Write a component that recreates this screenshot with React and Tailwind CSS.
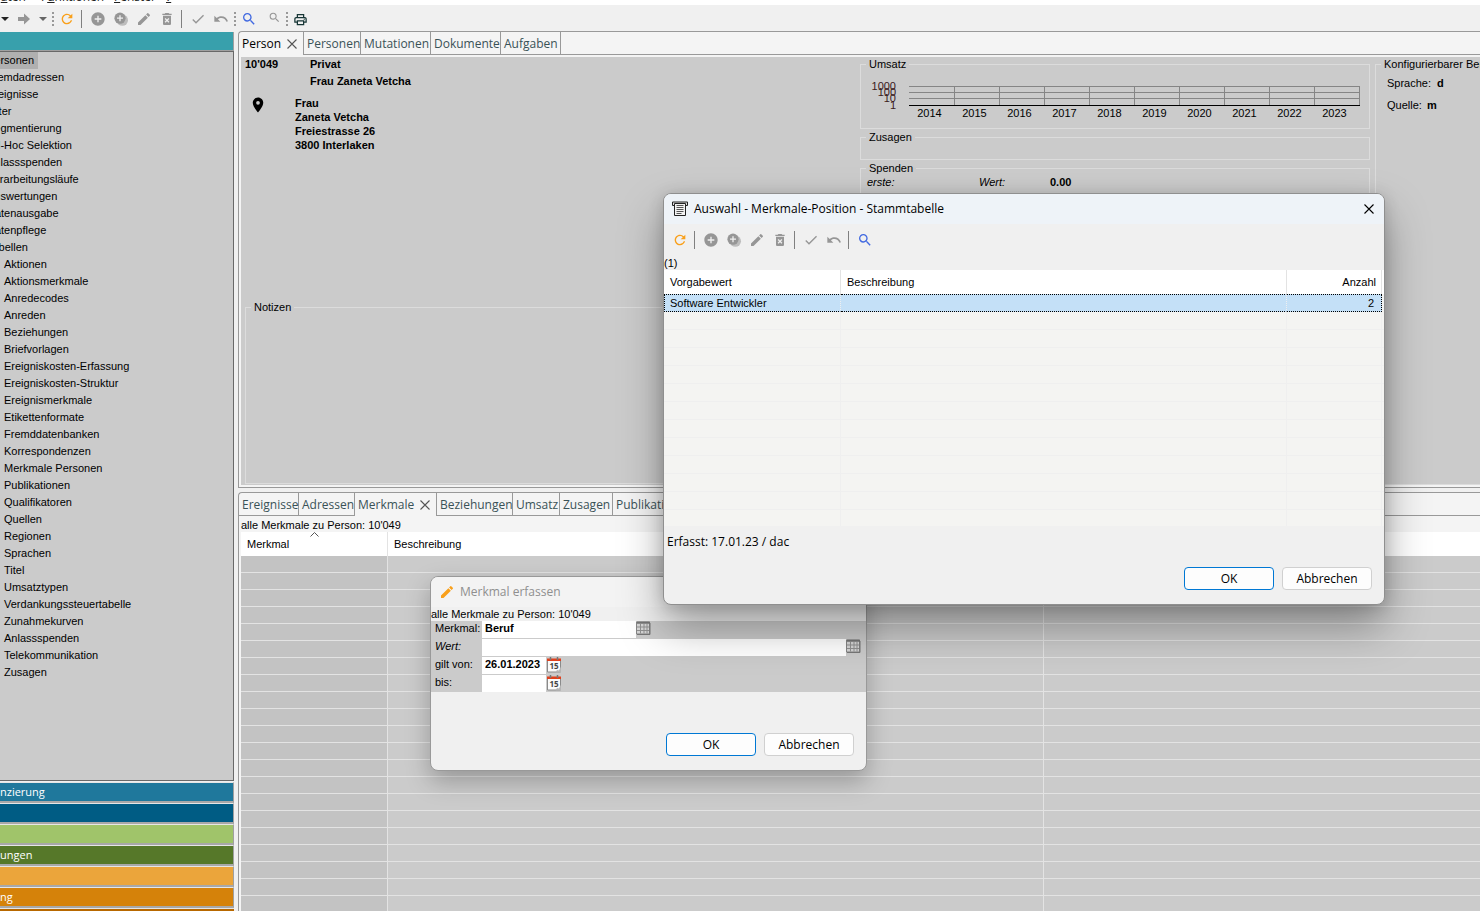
import React from "react";
import {
  MdRefresh,
  MdAddCircle,
  MdEdit,
  MdDeleteForever,
  MdCheck,
  MdUndo,
  MdSearch,
  MdOutlinePrint,
  MdPlace,
} from "react-icons/md";

const UI = "font-['Open_Sans','Noto_Sans',sans-serif]";

const topNav = [
  "Personen",
  "Fremdadressen",
  "Ereignisse",
  "Filter",
  "Segmentierung",
  "Ad-Hoc Selektion",
  "Anlassspenden",
  "Verarbeitungsläufe",
  "Auswertungen",
  "Datenausgabe",
  "Datenpflege",
  "Tabellen",
];

const subNav = [
  "Aktionen",
  "Aktionsmerkmale",
  "Anredecodes",
  "Anreden",
  "Beziehungen",
  "Briefvorlagen",
  "Ereigniskosten-Erfassung",
  "Ereigniskosten-Struktur",
  "Ereignismerkmale",
  "Etikettenformate",
  "Fremddatenbanken",
  "Korrespondenzen",
  "Merkmale Personen",
  "Publikationen",
  "Qualifikatoren",
  "Quellen",
  "Regionen",
  "Sprachen",
  "Titel",
  "Umsatztypen",
  "Verdankungssteuertabelle",
  "Zunahmekurven",
  "Anlassspenden",
  "Telekommunikation",
  "Zusagen",
];

const sections = [
  { text: "nzierung", color: "bg-[#1f789c]" },
  { text: "", color: "bg-[#005c84]" },
  { text: "", color: "bg-[#a0c46a]" },
  { text: "ungen", color: "bg-[#567829]" },
  { text: "", color: "bg-[#eba53b]" },
  { text: "ng", color: "bg-[#d5820a]" },
];

const years = [2014, 2015, 2016, 2017, 2018, 2019, 2020, 2021, 2022, 2023];

function CopyAddIcon() {
  return (
    <svg width="16" height="16" viewBox="0 0 16 16">
      <circle cx="9.4" cy="9.2" r="5.6" fill="#bdbdbd" />
      <circle cx="7" cy="7.2" r="5.6" fill="#969696" />
      <path d="M7 4.2v6M4 7.2h6" stroke="#f0f0f0" strokeWidth="1.3" />
    </svg>
  );
}

function ArrowIcon() {
  return (
    <svg width="16" height="16" viewBox="0 0 16 16">
      <path d="M2 6h6V2.6L14 8l-6 5.4V10H2z" fill="#969696" />
    </svg>
  );
}

function CloseIcon({ size = 10, color = "#555" }) {
  return (
    <svg width={size} height={size} viewBox="0 0 10 10" className="shrink-0">
      <path d="M.5.5l9 9M9.5.5l-9 9" stroke={color} strokeWidth="1.1" fill="none" />
    </svg>
  );
}

function ListWindowIcon() {
  return (
    <svg width="16" height="16" viewBox="0 0 16 16">
      <path d="M.5 1h15v3.5h-2v-1h-11v1h-2z" fill="#ddd" stroke="#222" />
      <path d="M2.5 2.5h11v12h-11z" fill="#f2f2f2" stroke="#222" />
      <path d="M4.500 4.500h7M4.500 6.500h7M4.500 8.500h7M4.500 10.500h7M4.500 12.500h5" stroke="#555" />
    </svg>
  );
}

function GridIcon() {
  return (
    <svg width="15" height="14" viewBox="0 0 15 14">
      <path d="M.5 1h13v12H.5z" fill="#d6d6d6" stroke="#858585" />
      <path d="M1 1.8h13" stroke="#757575" strokeWidth="2" />
      <path d="M1 6h12M1 9.500h12M4.500 3v9.500M8 3v9.500M11 3v9.500" stroke="#909090" />
      <path d="M14 2v11.500H1" fill="none" stroke="#777" />
    </svg>
  );
}

function CalendarIcon() {
  return (
    <svg width="15" height="16" viewBox="0 0 15 16">
      <path d="M.5 3h13v12H.5z" fill="#fbfbfb" stroke="#8a8a8a" />
      <path d="M0 1.500h14v2.500H0z" fill="#e0401c" />
      <path d="M3.500 0v3M10.500 0v3" stroke="#777" strokeWidth="1.500" />
      <path d="M14 9.500v6H8.500l1.500-2.500 2 .5z" fill="#b5b5b5" />
      <text x="7" y="12" textAnchor="middle" fontSize="8" fontWeight="700" fill="#444" className="font-['Open_Sans',sans-serif]">
        15
      </text>
    </svg>
  );
}

function Tool({ label, children, className = "w-[23px]" }) {
  return (
    <button type="button" aria-label={label} className={`flex h-6 shrink-0 items-center justify-center text-[#969696] ${className}`}>
      {children}
    </button>
  );
}

function Caret({ label, color }) {
  return (
    <Tool label={label} className="w-[10px]">
      <svg width="8" height="4" viewBox="0 0 8 4">
        <path d="M0 0h8L4 4z" fill={color} />
      </svg>
    </Tool>
  );
}

function Rule() {
  return (
    <div className="w-2 shrink-0 pl-[3px]">
      <div className="h-[18px] w-px bg-[#808080]" />
    </div>
  );
}

function Dots() {
  return (
    <div className="flex w-[5px] shrink-0 justify-center">
      <div className="h-[14px] border-l-2 border-dotted border-[#999]" />
    </div>
  );
}

function EditTools() {
  return (
    <>
      <Tool label="Aktualisieren">
        <MdRefresh size={16} className="text-[#f9a01b]" />
      </Tool>
      <Rule />
      <Tool label="Neu">
        <MdAddCircle size={16} />
      </Tool>
      <Tool label="Kopieren">
        <CopyAddIcon />
      </Tool>
      <Tool label="Bearbeiten">
        <MdEdit size={16} />
      </Tool>
      <Tool label="Löschen">
        <MdDeleteForever size={16} />
      </Tool>
      <Rule />
      <Tool label="Speichern">
        <MdCheck size={16} />
      </Tool>
      <Tool label="Rückgängig">
        <MdUndo size={16} />
      </Tool>
    </>
  );
}

function Tab({ label, width, active, dark, closable }) {
  return (
    <button
      type="button"
      role="tab"
      aria-selected={!!active}
      className={`flex h-[23px] shrink-0 items-center gap-[6px] border-r border-[#999] pl-[3px] text-[12px] whitespace-nowrap ${UI} ${width} ${
        active ? "" : "border-b pt-px"
      } ${dark ? "text-black" : "text-[#3a5257]"}`}
    >
      {label}
      {closable && <CloseIcon />}
    </button>
  );
}

function Group({ title, className = "", children }) {
  return (
    <fieldset className={`min-w-0 border border-[#dcdcdc] px-[5px] ${className}`}>
      <legend className="px-[3px] leading-[13px] whitespace-nowrap">{title}</legend>
      {children}
    </fieldset>
  );
}

function RevenueChart() {
  return (
    <svg width="498" height="52" viewBox="0 0 498 52" className="text-[11px]" shapeRendering="crispEdges">
      <path d="M43 15.500h451M43 21.500h451M43 27.500h451" stroke="#858585" />
      {years.map((y, i) => (
        <path key={y} d={`M${88.5 + i * 45} 15v19`} stroke="#858585" />
      ))}
      <path d="M43 34.500h451" stroke="#000" />
      {[
        ["1000", 19],
        ["100", 25],
        ["10", 31],
        ["1", 38],
      ].map(([t, y]) => (
        <text key={t} x="30" y={y} textAnchor="end" fill="#3a1a20">
          {t}
        </text>
      ))}
      {years.map((y, i) => (
        <text key={y} x={63.5 + i * 45} y="46" textAnchor="middle">
          {y}
        </text>
      ))}
    </svg>
  );
}

function DialogButtons() {
  return (
    <div className={`flex justify-end gap-2 pr-3 pb-[14px] text-[12px] ${UI}`}>
      <button type="button" className="h-[23px] w-[90px] rounded border border-[#0078d4] bg-[#fdfdfd]">
        OK
      </button>
      <button type="button" className="h-[23px] w-[90px] rounded border border-[#d0d0d0] bg-[#fdfdfd]">
        Abbrechen
      </button>
    </div>
  );
}

function FormRow({ id, label, italic, value, width, children }) {
  return (
    <div className="flex h-[18px] items-start">
      <label htmlFor={id} className={`w-[51px] shrink-0 pl-1 leading-[15px] ${italic ? "italic" : ""}`}>
        {label}
      </label>
      <input id={id} defaultValue={value} className={`h-[17px] bg-white px-[3px] pb-[3px] font-bold outline-none ${width}`} />
      {children}
    </div>
  );
}

function EditDialog() {
  return (
    <section
      role="dialog"
      aria-label="Merkmal erfassen"
      className="absolute top-[576px] left-[430px] flex h-[195px] w-[437px] flex-col overflow-hidden rounded-lg border border-[#999] bg-[#f0f0f0] shadow-[0_10px_24px_rgba(0,0,0,0.26)]"
    >
      <header className={`flex h-[30px] shrink-0 items-center gap-[5px] bg-[#f3f3f3] pl-2 text-[12px] text-[#8f8f8f] ${UI}`}>
        <MdEdit size={16} className="text-[#f9a01b]" />
        Merkmal erfassen
      </header>
      <p className="h-[14px] shrink-0 leading-[14px]">alle Merkmale zu Person: 10'049</p>
      <form className="h-[71px] shrink-0 bg-[#cbcbcb]">
        <FormRow id="merkmal" label="Merkmal:" value="Beruf" width="w-[154px]">
          <button type="button" aria-label="Merkmal wählen">
            <GridIcon />
          </button>
        </FormRow>
        <FormRow id="wert" label="Wert:" italic width="flex-1">
          <button type="button" aria-label="Wert wählen" className="w-5">
            <GridIcon />
          </button>
        </FormRow>
        <FormRow id="von" label="gilt von:" value="26.01.2023" width="w-[64px]">
          <button type="button" aria-label="Datum von wählen" className="pl-px">
            <CalendarIcon />
          </button>
        </FormRow>
        <FormRow id="bis" label="bis:" width="w-[64px]">
          <button type="button" aria-label="Datum bis wählen" className="pl-px">
            <CalendarIcon />
          </button>
        </FormRow>
      </form>
      <div className="mt-auto">
        <DialogButtons />
      </div>
    </section>
  );
}

function SelectDialog() {
  return (
    <section
      role="dialog"
      aria-label="Auswahl"
      className="absolute top-[193px] left-[663px] flex h-[412px] w-[722px] flex-col overflow-hidden rounded-lg border border-[#8f8f8f] bg-[#f0f0f0] shadow-[0_22px_44px_rgba(0,0,0,0.34),0_2px_16px_rgba(0,0,0,0.16)]"
    >
      <header className={`flex h-[30px] shrink-0 items-center gap-[6px] bg-[#eef3f8] pr-[10px] pl-2 text-[12px] ${UI}`}>
        <ListWindowIcon />
        <span className="flex-1">Auswahl - Merkmale-Position - Stammtabelle</span>
        <button type="button" aria-label="Schliessen">
          <CloseIcon color="#000" />
        </button>
      </header>
      <div className="flex h-8 shrink-0 items-center pl-1">
        <EditTools />
        <Rule />
        <Tool label="Suchen">
          <MdSearch size={16} className="text-[#4169e1]" />
        </Tool>
      </div>
      <p className="h-[14px] shrink-0 leading-[14px]">(1)</p>
      <div className="h-[256px] shrink-0 overflow-hidden bg-[#f4f4f2]">
        <table className="w-full table-fixed border-separate border-spacing-0 text-left">
          <colgroup>
            <col className="w-[177px]" />
            <col />
            <col className="w-[95px]" />
            <col className="w-[2px]" />
          </colgroup>
          <thead>
            <tr className="h-6 bg-white">
              <th className="border-r border-[#e3e3e3] pl-[6px] font-normal">Vorgabewert</th>
              <th className="border-r border-[#e3e3e3] pl-[6px] font-normal">Beschreibung</th>
              <th className="border-r border-[#e3e3e3] pr-[5px] text-right font-normal">Anzahl</th>
              <td />
            </tr>
          </thead>
          <tbody>
            <tr className="h-[18px] bg-[#c4e0f7]">
              <td className="border-y border-r border-l border-dotted border-black border-r-[#efefef] pl-[5px] leading-4">Software Entwickler</td>
              <td className="border-y border-r border-dotted border-black border-r-[#efefef]" />
              <td className="border-y border-r border-dotted border-black pr-[7px] text-right leading-4">2</td>
              <td className="bg-[#f4f4f2]" />
            </tr>
            {Array.from({ length: 12 }, (_, i) => (
              <tr key={i} className="h-[18px]">
                <td className="border-r border-b border-[#efefef]" />
                <td className="border-r border-b border-[#efefef]" />
                <td className="border-r border-b border-[#efefef]" />
                <td className="border-b border-[#efefef]" />
              </tr>
            ))}
          </tbody>
        </table>
      </div>
      <p className={`pt-[7px] pl-[3px] text-[12px] leading-[18px] ${UI}`}>Erfasst: 17.01.23 / dac</p>
      <div className="mt-auto">
        <DialogButtons />
      </div>
    </section>
  );
}

export default function App() {
  return (
    <div className="relative flex h-screen flex-col overflow-hidden bg-[#f0f0f0] font-['Liberation_Sans',Arial,sans-serif] text-[11px] text-black">
      <nav className={`flex h-[5px] shrink-0 items-end overflow-hidden bg-white pb-px text-[12px] leading-[14px] text-[#222] ${UI}`}>
        <a href="#daten" className="-ml-2 w-[49px]">D<u>a</u>ten</a>
        <a href="#funktionen" className="w-[73px]">F<u>u</u>nktionen</a>
        <a href="#fenster" className="w-[52px]"><u>F</u>enster</a>
        <a href="#hilfe"><u>?</u></a>
      </nav>

      <div className="flex h-[26px] shrink-0 items-center pt-[2px]">
        <Caret label="Zurück Verlauf" color="#222" />
        <Tool label="Vorwärts" className="w-[28px]">
          <ArrowIcon />
        </Tool>
        <Caret label="Vorwärts Verlauf" color="#666" />
        <div className="w-[2px]" />
        <Dots />
        <EditTools />
        <Dots />
        <Tool label="Suchen">
          <MdSearch size={16} className="text-[#4169e1]" />
        </Tool>
        <Tool label="Erweiterte Suche" className="w-6 pb-[3px] pl-1">
          <MdSearch size={13} />
        </Tool>
        <Dots />
        <Tool label="Drucken">
          <MdOutlinePrint size={15} className="text-[#173636]" />
        </Tool>
      </div>

      <div className="flex min-h-0 flex-1">
        <aside className="flex w-[234px] shrink-0 flex-col overflow-hidden">
          <div className="mt-px h-[19px] shrink-0 border-r border-b border-[#a0a0a0] bg-[#38a0ac]" />
          <div className="min-h-0 flex-1 overflow-hidden border-t border-r border-b border-[#696969] bg-[#cbcbcb]">
            <ul className="-ml-[14px]">
              {topNav.map((t, i) => (
                <li key={t} className="flex h-[17px]">
                  <a href={`#${t}`} className={`pr-1 pl-px leading-[17px] whitespace-nowrap ${i === 0 ? "bg-[#b0b0b0]" : ""}`}>
                    {t}
                  </a>
                </li>
              ))}
            </ul>
            <ul className="pl-1">
              {subNav.map((t) => (
                <li key={t} className="h-[17px] leading-[17px] whitespace-nowrap">
                  <a href={`#${t}`}>{t}</a>
                </li>
              ))}
            </ul>
          </div>
          <div className="mt-px shrink-0">
            {sections.map((s, i) => (
              <button
                key={i}
                type="button"
                aria-label={s.text || `Bereich ${i + 1}`}
                className={`block h-[21px] w-full border-t border-r border-b-2 border-t-[#e6e6e6] border-r-[#a0a0a0] border-b-[#a8a8a8] text-left leading-[18px] text-white ${UI} ${s.color}`}
              >
                {s.text}
              </button>
            ))}
            <div className="h-[3px] border-t border-t-[#e6e6e6] bg-[#b86800]" />
          </div>
        </aside>

        <main className="ml-1 flex min-w-0 flex-1 flex-col gap-1">
          <section className="flex h-[457px] shrink-0 flex-col rounded-tl border-t border-b border-l border-[#999] bg-[#f4f4f4]">
            <div role="tablist" className="flex">
              <Tab label="Person" width="w-[65px]" active dark closable />
              <Tab label="Personen" width="w-[57px]" />
              <Tab label="Mutationen" width="w-[70px]" />
              <Tab label="Dokumente" width="w-[70px]" />
              <Tab label="Aufgaben" width="w-[60px]" />
              <div className="flex-1 border-b border-[#999]" />
            </div>
            <div className="mt-[2px] mb-[2px] ml-[2px] flex min-h-0 flex-1 overflow-hidden bg-[#cbcbcb] pt-px">
              <div className="flex min-w-0 flex-1 flex-col pr-1 pl-1 font-bold">
                <div className="grid grid-cols-[65px_1fr] leading-[17px]">
                  <span className="leading-[13px]">10'049</span>
                  <span className="leading-[13px]">Privat</span>
                  <span />
                  <span className="pt-[2px]">Frau Zaneta Vetcha</span>
                </div>
                <div className="grid grid-cols-[50px_1fr] pt-[6px]">
                  <MdPlace size={18} className="ml-1" />
                  <address className="leading-[14px] not-italic">
                    Frau
                    <br />
                    Zaneta Vetcha
                    <br />
                    Freiestrasse 26
                    <br />
                    3800 Interlaken
                  </address>
                </div>
                <Group title="Notizen" className="mt-auto mb-px h-[183px] font-normal">
                  <span />
                </Group>
              </div>
              <div className="flex w-[510px] shrink-0 flex-col gap-[2px]">
                <Group title="Umsatz" className="h-[71px]">
                  <RevenueChart />
                </Group>
                <Group title="Zusagen" className="h-[29px]" />
                <Group title="Spenden" className="flex-1">
                  <dl className="grid grid-cols-[112px_71px_1fr] pl-px leading-[14px]">
                    <dt className="italic">erste:</dt>
                    <dt className="italic">Wert:</dt>
                    <dd className="font-bold">0.00</dd>
                  </dl>
                </Group>
              </div>
              <div className="-mr-px ml-[5px] w-[106px] shrink-0 overflow-hidden">
                <Group title="Konfigurierbarer Bereich" className="h-full w-[180px]">
                  <p className="pt-[5px] pl-[6px] leading-[14px]">
                    Sprache: <b className="pl-[3px]">d</b>
                  </p>
                  <p className="pt-2 pl-[6px] leading-[14px]">
                    Quelle: <b className="pl-[2px]">m</b>
                  </p>
                </Group>
              </div>
            </div>
          </section>

          <section className="flex min-h-0 flex-1 flex-col overflow-hidden rounded-tl border-t border-l border-[#999] bg-[#f4f4f4]">
            <div role="tablist" className="flex shrink-0">
              <Tab label="Ereignisse" width="w-[60px]" />
              <Tab label="Adressen" width="w-[56px]" />
              <Tab label="Merkmale" width="w-[82px]" active closable />
              <Tab label="Beziehungen" width="w-[76px]" />
              <Tab label="Umsatz" width="w-[47px]" />
              <Tab label="Zusagen" width="w-[53px]" />
              <Tab label="Publikationen" width="w-[84px]" />
              <div className="flex-1 border-b border-[#999]" />
            </div>
            <div className="ml-[2px] min-h-0 flex-1">
              <p className="h-4 leading-[18px]">alle Merkmale zu Person: 10'049</p>
              <table className="w-full table-fixed border-separate border-spacing-0 text-left">
                <colgroup>
                  <col className="w-[147px]" />
                  <col className="w-[656px]" />
                  <col />
                </colgroup>
                <thead>
                  <tr className="h-6 bg-white">
                    <th className="relative border-r border-[#e3e3e3] pl-[6px] font-normal">
                      Merkmal
                      <svg width="9" height="5" viewBox="0 0 9 5" className="absolute top-0 left-[69px]">
                        <path d="M.5 4.500l4-4 4 4" fill="none" stroke="#555" />
                      </svg>
                    </th>
                    <th className="border-r border-[#e3e3e3] pl-[6px] font-normal">Beschreibung</th>
                    <td />
                  </tr>
                </thead>
                <tbody>
                  {Array.from({ length: 21 }, (_, i) => (
                    <tr key={i} className="h-[17px] bg-[#cbcbcb]">
                      <td className="border-r border-b border-[#e3e3e3] bg-[#c3c3c3]" />
                      <td className="border-r border-b border-[#e3e3e3]" />
                      <td className="border-b border-[#e3e3e3]" />
                    </tr>
                  ))}
                </tbody>
              </table>
            </div>
          </section>
        </main>
      </div>

      <EditDialog />
      <SelectDialog />
    </div>
  );
}
